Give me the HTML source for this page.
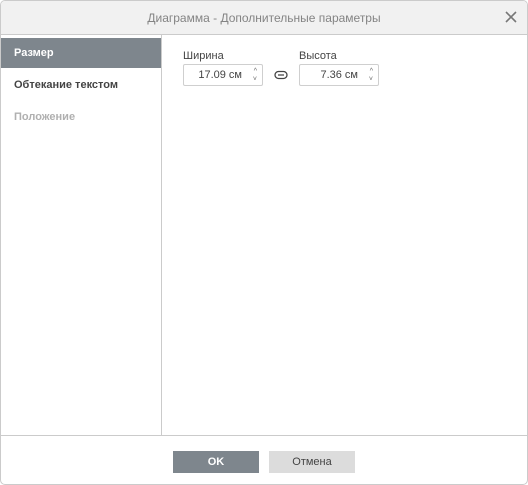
<!DOCTYPE html>
<html><head><meta charset="utf-8"><style>
*{margin:0;padding:0;box-sizing:border-box}
body{width:528px;height:485px;background:#fff;font-family:"Liberation Sans",Arial,sans-serif;font-size:11px;color:#444;position:relative;overflow:hidden}
.dlg{position:absolute;left:0;top:0;width:528px;height:485px;border:1px solid #cbcbcb;border-radius:5px;overflow:hidden;background:#fff}
.hdr{position:absolute;left:0;top:0;width:526px;height:34px;background:#f1f1f1;border-bottom:1px solid #cbcbcb;text-align:center;line-height:34px;font-size:12px;color:#848484}
.x{position:absolute;right:10px;top:10px;width:12px;height:12px}
.side{position:absolute;left:0;top:34px;width:161px;height:400px;border-right:1px solid #cbcbcb}
.it{position:absolute;left:0;width:160px;height:30px;line-height:30px;padding-left:13px;font-weight:bold;font-size:11px}
.sel{background:#7e868d;color:#fff}
.foot{position:absolute;left:0;top:434px;width:526px;border-top:1px solid #cbcbcb;height:50px}
.btn{position:absolute;top:15px;width:86px;height:22px;line-height:22px;text-align:center;font-weight:bold;font-size:11px}
.lbl{position:absolute;top:49px;font-size:11px;color:#444}
.inp{position:absolute;top:63px;width:80px;height:22px;border:1px solid #cfcfcf;border-radius:2px;text-align:right;padding-right:20px;line-height:20px;color:#444}
.sp{position:absolute;right:5px;font-size:7px;color:#666;line-height:7px}
</style></head><body><div class="dlg">
<div class="hdr">Диаграмма - Дополнительные параметры
<svg class="x" viewBox="0 0 12 12"><path d="M1 1L11 11M11 1L1 11" stroke="#777" stroke-width="1.6"/></svg></div>
<div class="side">
<div class="it sel" style="top:3px">Размер</div>
<div class="it" style="top:35px;color:#444">Обтекание текстом</div>
<div class="it" style="top:67px;color:#b0b0b0">Положение</div>
</div>
<div class="lbl" style="left:182px">Ширина</div>
<div class="inp" style="left:182px">17.09 см<span class="sp" style="top:3px">^</span><span class="sp" style="top:11px">˅</span></div>
<svg style="position:absolute;left:273px;top:69px" width="14" height="10" viewBox="0 0 14 10"><rect x="1" y="1.5" width="12" height="7" rx="3.5" fill="none" stroke="#444" stroke-width="1.3"/><path d="M4 5H10" stroke="#444" stroke-width="1.3"/></svg>
<div class="lbl" style="left:298px">Высота</div>
<div class="inp" style="left:298px">7.36 см<span class="sp" style="top:3px">^</span><span class="sp" style="top:11px">˅</span></div>
<div class="foot">
<div class="btn" style="left:172px;background:#7e868d;color:#fff">OK</div>
<div class="btn" style="left:268px;background:#dcdcdc;color:#444;font-weight:normal">Отмена</div>
</div>
</div></body></html>
